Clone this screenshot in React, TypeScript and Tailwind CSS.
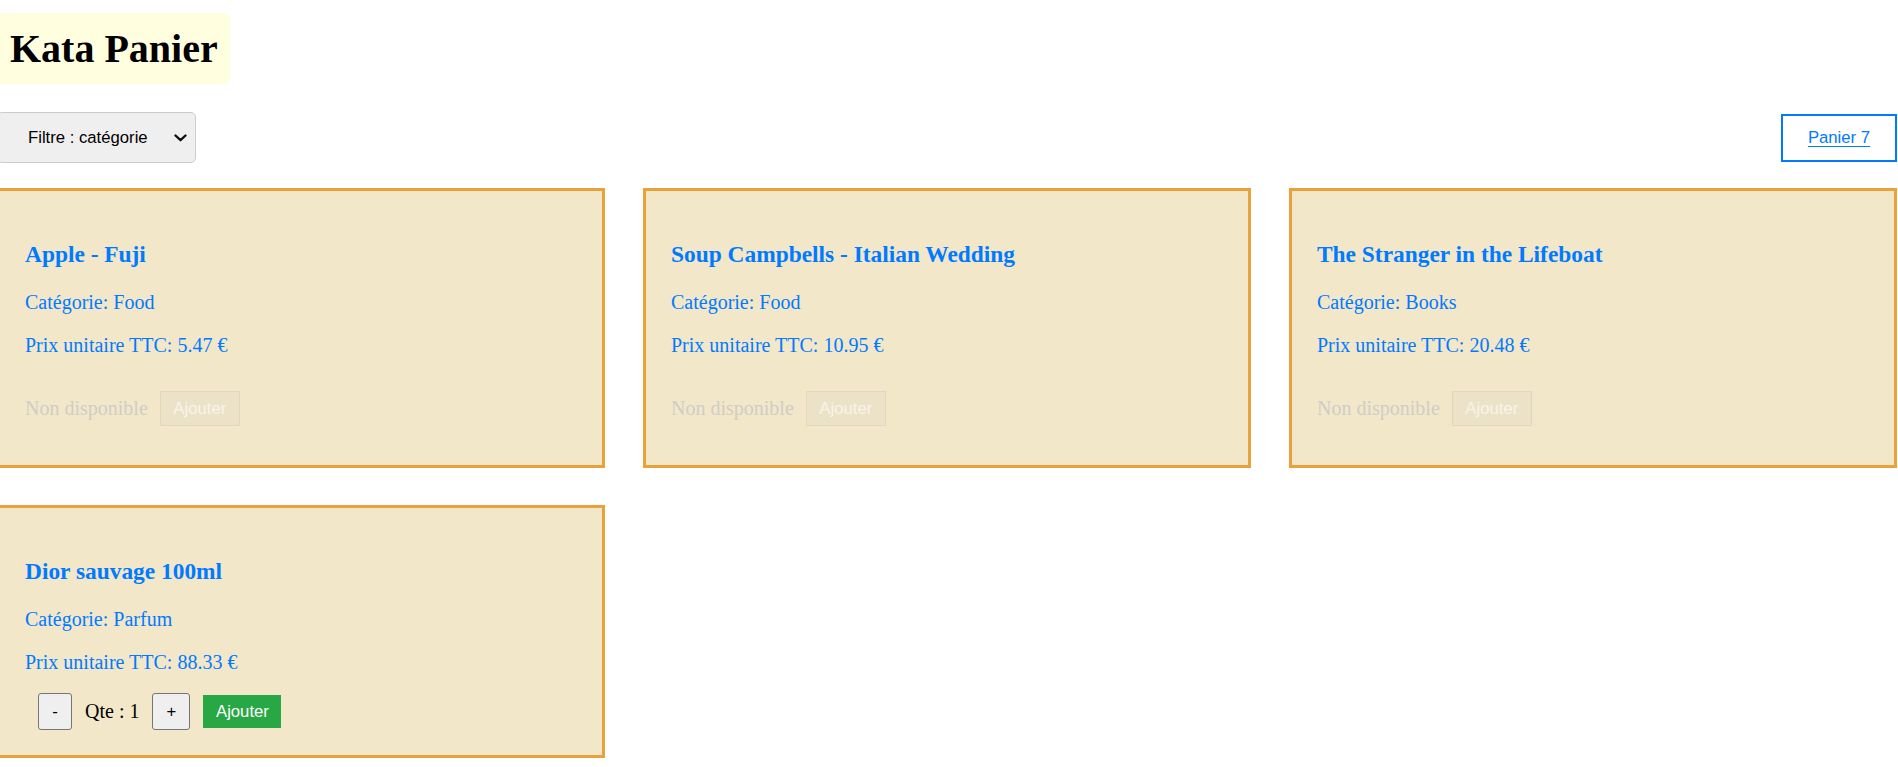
import React from "react";

type Product = {
  name: string;
  category: string;
  price: string;
  available: boolean;
};

const products: Product[] = [
  { name: "Apple - Fuji", category: "Food", price: "5.47", available: false },
  { name: "Soup Campbells - Italian Wedding", category: "Food", price: "10.95", available: false },
  { name: "The Stranger in the Lifeboat", category: "Books", price: "20.48", available: false },
  { name: "Dior sauvage 100ml", category: "Parfum", price: "88.33", available: true },
];

const serif = "font-['Liberation_Serif','Times_New_Roman',serif]";
const sans = "font-['Liberation_Sans',Arial,sans-serif]";

function Card({ p }: { p: Product }) {
  return (
    <div className="flex flex-col border-[3px] border-[#e9a13b] bg-[#f3e7ca] px-[25px] pt-[24px] pb-[25px]">
      <h3 className={`${serif} mt-[26px] text-[23.4px] font-bold leading-[27px] text-[#007bff]`}>{p.name}</h3>
      <p className={`${serif} mt-[23px] text-[20px] leading-[23px] text-[#007bff]`}>Catégorie: {p.category}</p>
      <p className={`${serif} mt-[20px] text-[20px] leading-[23px] text-[#007bff]`}>Prix unitaire TTC: {p.price} €</p>
      {p.available ? (
        <div className="mt-[19px] flex items-center">
          <button className={`${sans} ml-[13px] flex h-[37px] w-[34px] items-center justify-center rounded-[3px] border border-[#767676] bg-[#efefef] text-[16.7px] text-black`}>
            -
          </button>
          <span className={`${serif} ml-[13px] text-[20px] leading-[23px] text-black`}>Qte : 1</span>
          <button className={`${sans} ml-[13px] flex h-[37px] w-[38px] items-center justify-center rounded-[3px] border border-[#767676] bg-[#efefef] text-[16.7px] text-black`}>
            +
          </button>
          <button className={`${sans} ml-[13px] flex h-[33px] w-[78px] items-center justify-center bg-[#28a745] text-[16.7px] text-white`}>
            Ajouter
          </button>
        </div>
      ) : (
        <div className="mt-[34px] mb-[14px] flex items-center">
          <span className={`${serif} text-[20px] leading-[23px] text-[#cfcdc6]`}>Non disponible</span>
          <button
            disabled
            className={`${sans} ml-[12px] flex h-[35px] w-[80px] items-center justify-center border border-[#e2d7bc] bg-[#ece2c8] text-[16.7px] text-[#f9f4e8]`}
          >
            Ajouter
          </button>
        </div>
      )}
    </div>
  );
}

export default function App() {
  return (
    <div className="min-h-screen overflow-hidden bg-white">
      <div className="ml-[-3px] w-[1900px]">
        <div className="pt-[13px]">
          <h1 className={`${serif} inline-block rounded-[5px] bg-[#ffffe0] pl-[13px] pr-[12.5px] py-[12.5px] text-[40px] font-bold leading-[46px] text-black`}>
            Kata Panier
          </h1>
        </div>
        <div className="mt-[28px] flex items-center justify-between">
          <div className={`${sans} flex h-[51px] w-[199px] items-center rounded-[5px] border border-[#cccccc] bg-[#efefef] pl-[30px] pr-[7px] text-[16.7px] text-black`}>
            <span className="flex-1">Filtre : catégorie</span>
            <svg width="13" height="8" viewBox="0 0 13 8" className="mr-[1px]">
              <path d="M1.5 1.5 L6.5 6.2 L11.5 1.5" fill="none" stroke="#111" strokeWidth="2.4" strokeLinecap="round" strokeLinejoin="round" />
            </svg>
          </div>
          <button className={`${sans} flex h-[48px] w-[116px] items-center justify-center border-2 border-[#007bff] bg-white text-[16.7px] text-[#007bff] underline underline-offset-[3px]`}>
            Panier 7
          </button>
        </div>
        <div className="mt-[25px] grid grid-cols-3 gap-x-[38px] gap-y-[37px] items-stretch">
          {products.map((p) => (
            <div key={p.name} className={p.available ? "self-start" : ""}>
              <Card p={p} />
            </div>
          ))}
        </div>
      </div>
    </div>
  );
}
